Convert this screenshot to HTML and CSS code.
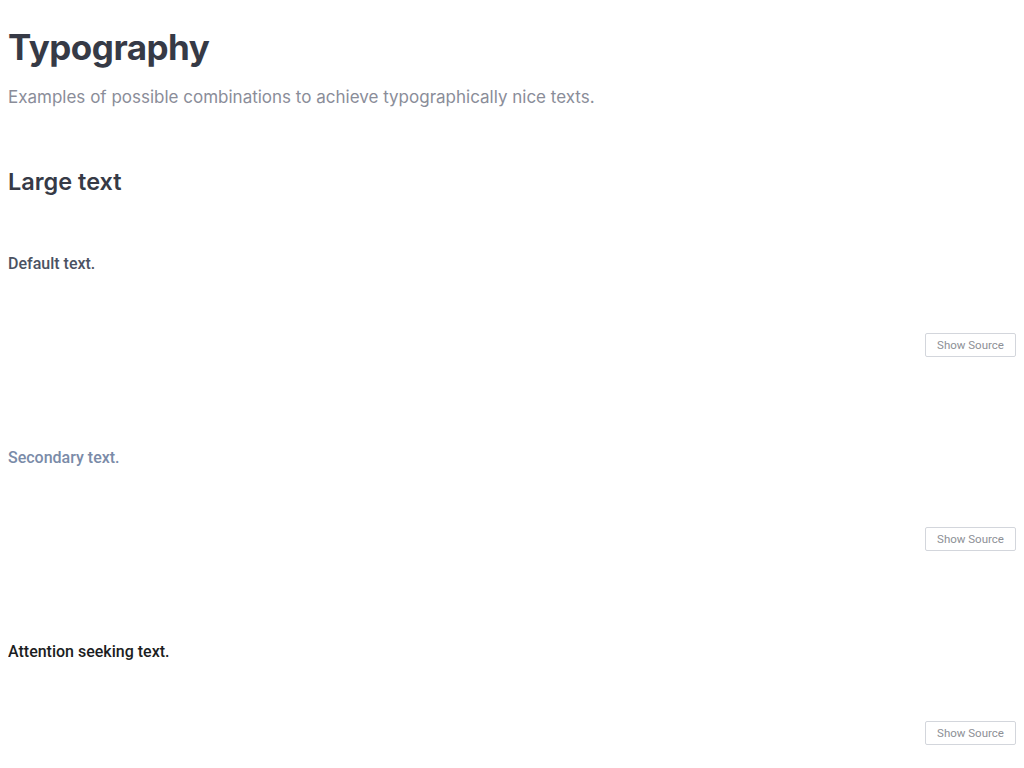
FILE: index.html
```html
<!DOCTYPE html>
<html lang="en">
<head>
<meta charset="utf-8">
<title>Typography</title>
<link rel="stylesheet" href="styles.css">
</head>
<body>
<header class="page-head">
  <h1 class="title">Typography</h1>
  <p class="subtitle">Examples of possible combinations to achieve typographically nice texts.</p>
</header>
<section class="group">
  <h2 class="group-title">Large text</h2>
  <div class="example">
    <div class="demo"><p class="txt txt-default">Default text.</p></div>
    <div class="actions"><button class="src-btn">Show Source</button></div>
  </div>
  <div class="example">
    <div class="demo"><p class="txt txt-secondary">Secondary text.</p></div>
    <div class="actions"><button class="src-btn">Show Source</button></div>
  </div>
  <div class="example">
    <div class="demo"><p class="txt txt-attention">Attention seeking text.</p></div>
    <div class="actions"><button class="src-btn">Show Source</button></div>
  </div>
</section>
</body>
</html>
```

FILE: styles.css
```css
html, body { background: #ffffff; }
body {
  margin: 8px;
  font-family: Inter, "Liberation Sans", sans-serif;
}
.page-head { padding-top: 17px; }
.title {
  margin: 0;
  font-size: 35px;
  line-height: 44px;
  font-weight: 700;
  color: #363a46;
  letter-spacing: -0.5px;
}
.subtitle {
  margin: 16px 0 0;
  font-size: 17px;
  line-height: 24px;
  color: #8a8d99;
}
.group { margin-top: 57px; }
.group-title {
  margin: 0;
  font-size: 23.5px;
  line-height: 32px;
  font-weight: 600;
  color: #363a46;
}
.example {
  display: flex;
  flex-direction: column;
  padding-bottom: 35px;
}
.demo { padding-top: 54px; }
.txt {
  margin: 0;
  font-family: Roboto, "Liberation Sans", sans-serif;
  font-size: 16px;
  line-height: 24px;
  font-weight: 500;
}
.txt-default { color: #4b5262; }
.txt-secondary { color: #7a8ba8; }
.txt-attention { color: #1b1d22; }
.actions {
  display: flex;
  justify-content: flex-end;
  padding-top: 57px;
}
.src-btn {
  height: 24px;
  width: 91px;
  padding: 0;
  border: 1px solid #d3d6dc;
  border-radius: 2px;
  background: #ffffff;
  color: #8d9096;
  font-family: Roboto, "Liberation Sans", sans-serif;
  font-size: 11.5px;
}
```
